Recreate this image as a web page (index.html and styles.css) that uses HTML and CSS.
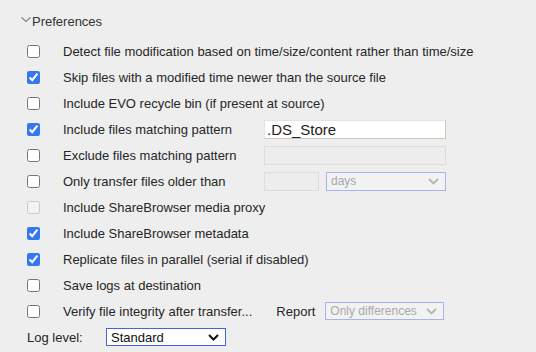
FILE: index.html
```html
<!DOCTYPE html>
<html lang="en">
<head>
    <meta charset="UTF-8">
    <title>Preferences</title>
    <link rel="stylesheet" href="styles.css">
</head>
<body>
    <div class="panel">
        <div class="panel-title">
            <svg class="caret" width="10" height="6" viewBox="0 0 10 6"><path d="M0.5 0.5 L5 4.5 L9.5 0.5" fill="none" stroke="#8a8a8a" stroke-width="1.3"/></svg>
            <span>Preferences</span>
        </div>

        <div class="rows">
            <div class="row">
                <input type="checkbox">
                <label>Detect file modification based on time/size/content rather than time/size</label>
            </div>
            <div class="row">
                <input type="checkbox" checked>
                <label>Skip files with a modified time newer than the source file</label>
            </div>
            <div class="row">
                <input type="checkbox">
                <label>Include EVO recycle bin (if present at source)</label>
            </div>
            <div class="row">
                <input type="checkbox" checked>
                <label class="fixed">Include files matching pattern</label>
                <div class="field">.DS_Store</div>
            </div>
            <div class="row">
                <input type="checkbox">
                <label class="fixed">Exclude files matching pattern</label>
                <div class="field disabled"></div>
            </div>
            <div class="row">
                <input type="checkbox">
                <label class="fixed">Only transfer files older than</label>
                <div class="field disabled short"></div>
                <div class="select disabled days">
                    <span>days</span>
                    <svg width="11" height="7" viewBox="0 0 11 7"><path d="M1 1 L5.5 5.5 L10 1" fill="none" stroke="#b5b5b5" stroke-width="1.8"/></svg>
                </div>
            </div>
            <div class="row">
                <input type="checkbox" disabled>
                <label>Include ShareBrowser media proxy</label>
            </div>
            <div class="row">
                <input type="checkbox" checked>
                <label>Include ShareBrowser metadata</label>
            </div>
            <div class="row">
                <input type="checkbox" checked>
                <label>Replicate files in parallel (serial if disabled)</label>
            </div>
            <div class="row">
                <input type="checkbox">
                <label>Save logs at destination</label>
            </div>
            <div class="row">
                <input type="checkbox">
                <label>Verify file integrity after transfer...</label>
                <span class="report">Report</span>
                <div class="select disabled report-select">
                    <span>Only differences</span>
                    <svg width="11" height="7" viewBox="0 0 11 7"><path d="M1 1 L5.5 5.5 L10 1" fill="none" stroke="#b5b5b5" stroke-width="1.8"/></svg>
                </div>
            </div>
        </div>

        <div class="log-row">
            <span class="log-label">Log level:</span>
            <div class="select log-select">
                <span>Standard</span>
                <svg width="11" height="7" viewBox="0 0 11 7"><path d="M1 1 L5.5 5.5 L10 1" fill="none" stroke="#111" stroke-width="2"/></svg>
            </div>
        </div>
    </div>
</body>
</html>
```

FILE: styles.css
```css
body {
    margin: 0;
    background: #eeeeee;
    color: #262626;
    font-family: "Liberation Sans", Arial, sans-serif;
    font-size: 13px;
}

.panel {
    padding: 13px 0 0 21px;
}

.panel-title {
    display: flex;
    align-items: center;
    height: 16px;
    font-size: 13px;
    color: #333;
}

.caret {
    margin-right: 1px;
    margin-bottom: 2px;
}

.rows {
    margin-top: 9px;
    padding-left: 6px;
}

.row {
    display: flex;
    align-items: center;
    height: 26px;
}

.row input[type="checkbox"] {
    margin: 0 23px 0 0;
    width: 13px;
    height: 13px;
    accent-color: #3478f0;
}

.row label {
    white-space: nowrap;
}

.row label.fixed {
    width: 201px;
}

.field {
    box-sizing: border-box;
    width: 182px;
    height: 19px;
    background: #fff;
    border: 1px solid #e6e3dc;
    border-right-color: #cfc8b8;
    border-bottom-color: #cfc8b8;
    font-size: 15px;
    line-height: 17px;
    padding-left: 2px;
    color: #222;
}

.field.disabled {
    background: #ededed;
    border-color: #dcdcdc;
}

.field.short {
    width: 55px;
}

.select {
    box-sizing: border-box;
    display: flex;
    align-items: center;
    justify-content: space-between;
    height: 19px;
    padding: 0 6px 0 4px;
    border: 1px solid #7d8fe0;
    background: #fff;
    font-size: 13px;
}

.select.disabled {
    background: #f2f2f2;
    border-color: #a6b3ee;
    color: #a9a9a9;
    font-size: 12px;
}

.days {
    width: 120px;
    margin-left: 7px;
}

.report {
    margin-left: 24px;
    margin-right: 10px;
}

.report-select {
    width: 119px;
    height: 18px;
}

.log-row {
    display: flex;
    align-items: center;
    height: 26px;
    padding-left: 6px;
}

.log-label {
    width: 79px;
}

.log-select {
    width: 120px;
    height: 18px;
    border-color: #4563d8;
    color: #111;
}
```
